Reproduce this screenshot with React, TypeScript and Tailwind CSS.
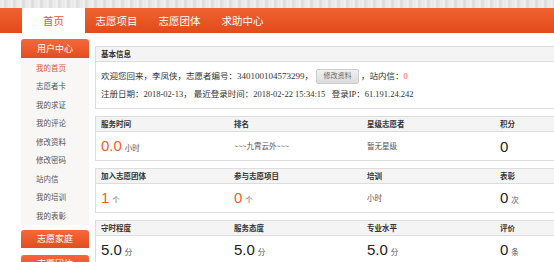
import React from 'react';

const cjk = '"Noto Sans CJK SC", sans-serif';

const tabs = ['首页', '志愿项目', '志愿团体', '求助中心'];

const menu = [
  '我的首页',
  '志愿者卡',
  '我的求证',
  '我的评论',
  '修改资料',
  '修改密码',
  '站内信',
  '我的培训',
  '我的表彰',
];

type Cell = { label: string; value?: string; unit?: string; text?: string; orange?: boolean };

const rows: Cell[][] = [
  [
    { label: '服务时间', value: '0.0', unit: '小时', orange: true },
    { label: '排名', text: '~~~九霄云外~~~' },
    { label: '星级志愿者', text: '暂无星级' },
    { label: '积分', value: '0' },
  ],
  [
    { label: '加入志愿团体', value: '1', unit: '个', orange: true },
    { label: '参与志愿项目', value: '0', unit: '个', orange: true },
    { label: '培训', text: '小时' },
    { label: '表彰', value: '0', unit: '次' },
  ],
  [
    { label: '守时程度', value: '5.0', unit: '分' },
    { label: '服务态度', value: '5.0', unit: '分' },
    { label: '专业水平', value: '5.0', unit: '分' },
    { label: '评价', value: '0', unit: '条' },
  ],
];

function SideHeader({ title }: { title: string }) {
  return (
    <div className="flex h-[18px] items-center justify-center rounded-t-[3px] bg-gradient-to-b from-[#f4683a] to-[#e44d1e] text-[9px] text-white">
      {title}
    </div>
  );
}

function StatBox({ cells }: { cells: Cell[] }) {
  return (
    <div className="border border-[#dddddd]">
      <div className="flex h-[15px] items-center border-b border-[#dddddd] bg-[#f4f4f4] pl-[5px]">
        {cells.map((c) => (
          <div key={c.label} className="w-[133px] shrink-0 text-[7.5px] font-bold text-[#333333]">
            {c.label}
          </div>
        ))}
      </div>
      <div className="flex h-[28px] items-center pl-[5px]">
        {cells.map((c) => (
          <div key={c.label} className="flex w-[133px] shrink-0 items-baseline">
            {c.text ? (
              <span className="text-[7.5px] text-[#555555]">{c.text}</span>
            ) : (
              <>
                <span
                  className={`text-[15px] leading-none ${c.orange ? 'text-[#f0602f]' : 'text-[#222222]'}`}
                  style={{ fontFamily: '"Liberation Sans", sans-serif' }}
                >
                  {c.value}
                </span>
                {c.unit && <span className="ml-[3px] text-[7.5px] text-[#555555]">{c.unit}</span>}
              </>
            )}
          </div>
        ))}
      </div>
    </div>
  );
}

export default function App() {
  return (
    <div className="h-[262px] w-[554px] overflow-hidden bg-white" style={{ fontFamily: cjk }}>
      <div className="h-[8px] bg-[repeating-linear-gradient(90deg,#e6e6e6_0px,#f2f2f2_3px,#d9d9d9_5px,#efefef_9px)]" />
      <nav className="flex h-[25px] bg-gradient-to-b from-[#f0622f] to-[#e24a1b] pl-[22px]">
        {tabs.map((t, i) => (
          <div
            key={t}
            className={`flex w-[63px] items-center justify-center text-[10.5px] ${
              i === 0 ? 'bg-white text-[#e8572a]' : 'text-white'
            }`}
          >
            {t}
          </div>
        ))}
      </nav>

      <div className="flex gap-[6px] pl-[21px] pt-[6px]">
        <aside className="w-[68px] shrink-0">
          <div className="flex h-[19px] items-center justify-center rounded-t-[3px] bg-gradient-to-b from-[#f4683a] to-[#e44d1e] text-[9px] text-white">
            用户中心
          </div>
          <ul className="bg-[#f9f7f5] pl-[15px]">
            {menu.map((m, i) => (
              <li
                key={m}
                className={`flex h-[18.5px] items-center text-[7.5px] ${i === 0 ? 'text-[#d9572a]' : 'text-[#555555]'}`}
              >
                {m}
              </li>
            ))}
          </ul>
          <div className="mt-[5px] flex flex-col gap-[7px]">
            <SideHeader title="志愿家庭" />
            <SideHeader title="志愿团体" />
          </div>
        </aside>

        <main className="flex w-[560px] shrink-0 flex-col gap-[7px] pt-[7px]">
          <div className="border border-[#dddddd]">
            <div className="flex h-[15px] items-center border-b border-[#dddddd] bg-[#f4f4f4] pl-[5px] text-[7.5px] font-bold text-[#333333]">
              基本信息
            </div>
            <div
              className="flex h-[46px] flex-col justify-center gap-[5px] pl-[5px] text-[8.5px] text-[#333333]"
              style={{ fontFamily: '"Liberation Serif", "Noto Sans CJK SC", serif' }}
            >
              <div className="flex h-[14px] items-center">
                <span>欢迎您回来，李凤侠，志愿者编号：</span>
                <span className="text-[9px]">340100104573299</span>
                <span>，</span>
                <span className="ml-[3px] mr-[2px] flex h-[15px] w-[43px] items-center justify-center rounded-[2px] border border-[#cccccc] bg-gradient-to-b from-[#f0f0f0] to-[#dcdcdc] text-[7px] text-[#666666]">
                  修改资料
                </span>
                <span>，站内信：</span>
                <span className="text-[#f0602f]">0</span>
              </div>
              <div className="flex h-[12px] items-center whitespace-pre">
                注册日期：2018-02-13， 最近登录时间：2018-02-22 15:34:15   登录IP：61.191.24.242
              </div>
            </div>
          </div>
          {rows.map((r, i) => (
            <StatBox key={i} cells={r} />
          ))}
        </main>
      </div>
    </div>
  );
}
